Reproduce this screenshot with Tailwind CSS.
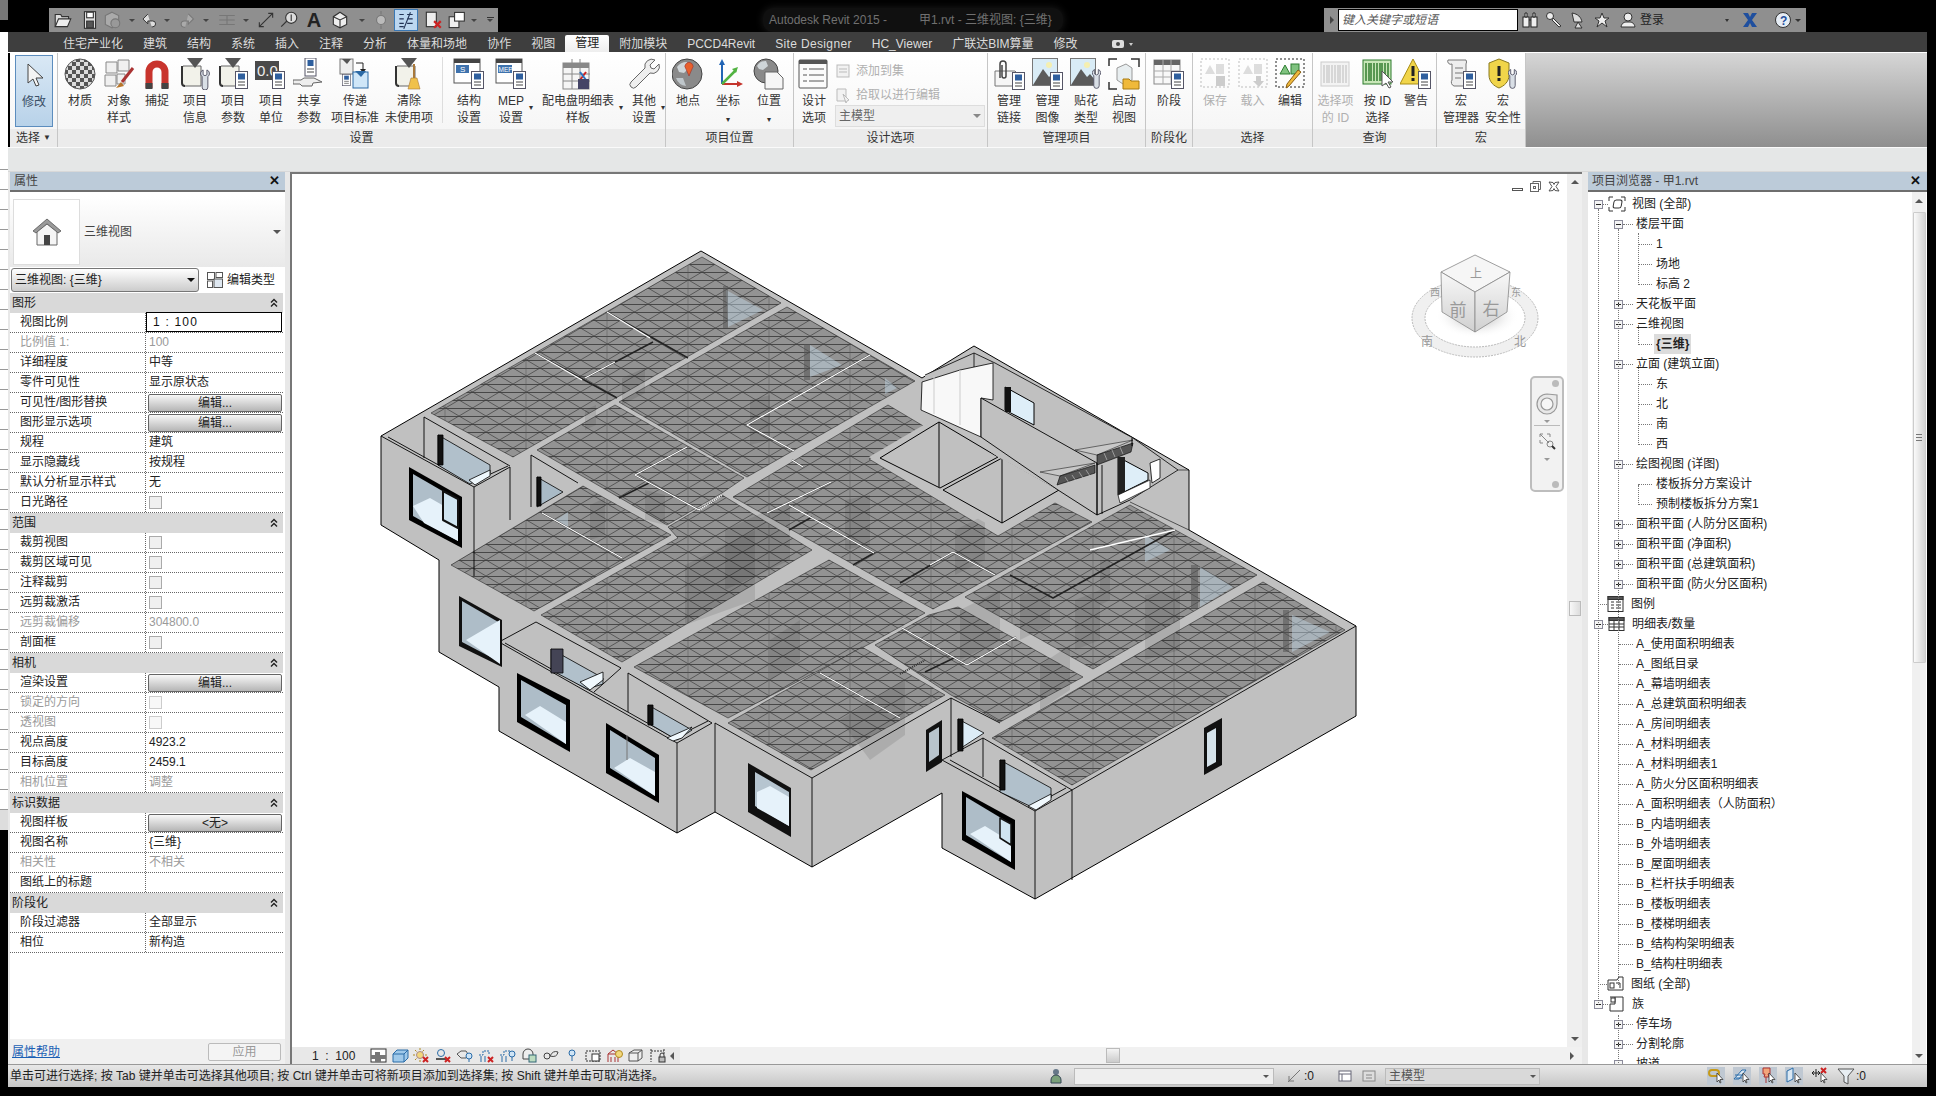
<!DOCTYPE html>
<html lang="zh-CN">

<head>
    <meta charset="UTF-8">
    <title>Autodesk Revit 2015</title>
    <script src="https://cdn.jsdelivr.net/npm/@tailwindcss/browser@4"></script>
</head>

<body class="bg-black">
    <div class="w-[1936px] h-[1096px] flex items-start overflow-hidden bg-black text-[12px] leading-[16px] text-[#222] font-['Liberation_Sans','Noto_Sans_CJK_SC',sans-serif]">
        <!-- window behind the app, left edge -->
        <div class="w-[8px] shrink-0 flex flex-col">
            <div class="h-[20px] bg-[#777]"></div>
            <div class="h-[12px]"></div>
            <div class="h-[118px] bg-white"></div>
            <div class="h-[660px] bg-[#f4f4f4] bg-[repeating-linear-gradient(to_bottom,#fff_0,#fff_19px,#999_19px,#999_20px)]"></div>
            <div class="h-[20px] bg-[#ddd]"></div>
        </div>

        <div class="w-[1919px] shrink-0 flex flex-col">
            <!-- title row -->
            <div class="h-[32px] flex items-start pt-[8px] bg-black">
                <div id="qat" class="ml-[41px] w-[449px] h-[24px] bg-[#8f8f8f] flex items-center"></div>
                <div class="ml-[265px] w-[300px] h-[24px] flex items-center gap-[32px] px-[6px] text-[#707070] bg-[#101010] shadow-[0_0_8px_#1c1c1c] rounded-[10px] text-[12px] whitespace-nowrap">
                    <span>Autodesk Revit 2015 -</span><span>甲1.rvt - 三维视图: {三维}</span>
                </div>
                <div class="ml-[261px] w-[482px] h-[24px] bg-[#8f8f8f] flex items-center pl-[6px]">
                    <span class="w-0 h-0 border-y-[4px] border-y-transparent border-l-[4px] border-l-[#444]"></span>
                    <div class="ml-[4px] w-[180px] h-[22px] bg-white border border-black flex items-center pl-[3px] italic text-[#555]">键入关键字或短语</div>
                    <div id="infocenter" class="flex items-center"></div>
                </div>
            </div>
            <!-- menu tabs -->
            <div class="h-[20px] bg-[#3e3e3e] flex items-end pl-[55px] text-[#dcdcdc]">
                <div class="flex h-[17px] items-center gap-[20px] whitespace-nowrap">
                    <span>住宅产业化</span><span>建筑</span><span>结构</span><span>系统</span><span>插入</span><span>注释</span><span>分析</span><span>体量和场地</span><span>协作</span><span>视图</span>
                    <span class="-mx-[10px] w-[44px] h-[17px] bg-gradient-to-b from-white to-[#eee] rounded-t-[2px] text-[#222] text-center">管理</span>
                    <span>附加模块</span><span>PCCD4Revit</span><span class="tracking-[.35px]">Site Designer</span><span>HC_Viewer</span><span>广联达BIM算量</span><span>修改</span>
                    <svg class="ml-[12px]" width="24" height="12" viewBox="0 0 24 12"><rect x="2" y="2" width="12" height="8" rx="2" fill="#ddd"/><circle cx="8" cy="6" r="2" fill="#444"/><path d="M19 5h4l-2 3z" fill="#ccc"/></svg>
                </div>
            </div>
            <!-- ribbon -->
            <div id="ribbon" class="h-[95px] flex pl-[2px] border-t border-white"></div>
            <div class="h-[25px] bg-[#e5e7e7] border-t border-[#fafafa] border-b border-b-[#d8d8d8]"></div>

            <!-- work area -->
            <div class="h-[892px] flex bg-[#e8e8e8]">
                <!-- properties -->
                <div class="w-[275px] ml-[2px] shrink-0 flex flex-col bg-white">
                    <div class="h-[18px] bg-[#bccbd9] flex items-center justify-between pl-[4px] pr-[5px] text-[#444]"><span>属性</span><span class="font-bold text-[#111] text-[13px]">✕</span></div>
                    <div class="h-[2px] bg-[#6e6e6e]"></div>
                    <div class="h-[71px] flex items-center pl-[3px] pr-[4px] bg-gradient-to-b from-white to-[#e9e9e9] mt-[4px]">
                        <div class="w-[67px] h-[66px] flex items-center justify-center bg-white border border-[#ddd]">
                            <svg width="32" height="30" viewBox="0 0 32 30"><path d="M2 14 16 2l14 12-3 2L16 7 5 16z" fill="#9a9a9a" stroke="#555" stroke-width=".8"/><path d="M6 15 16 7l10 8v13H6z" fill="#f5f5f5" stroke="#666"/><rect x="13" y="18" width="6" height="10" fill="#444"/></svg>
                        </div>
                        <span class="ml-[4px] text-[#444]">三维视图</span>
                        <span class="ml-auto w-0 h-0 border-x-[4px] border-x-transparent border-t-[4px] border-t-[#555]"></span>
                    </div>
                    <div class="h-[26px] flex items-center">
                        <div class="ml-[1px] w-[188px] h-[24px] rounded-[3px] border border-[#777] bg-gradient-to-b from-white to-[#ccc] flex items-center justify-between px-[3px]"><span>三维视图: {三维}</span><span class="w-0 h-0 border-x-[4px] border-x-transparent border-t-[4px] border-t-[#111]"></span></div>
                        <svg class="ml-[7px]" width="18" height="18" viewBox="0 0 18 18" fill="#fff" stroke="#555"><rect x="1.5" y="1.5" width="7" height="7"/><rect x="10" y="1.5" width="6.500" height="5"/><rect x="1.500" y="10" width="5" height="6.500"/><rect x="8" y="8" width="8.500" height="8.500" fill="#dfe8f1"/></svg>
                        <span class="ml-[3px]">编辑类型</span>
                    </div>
                    <div id="props" class="w-[273px]"></div>
                    <div class="flex-1"></div>
                    <div class="h-[25px] bg-[#f0f0f0] flex items-center justify-between pl-[2px] pr-[4px]">
                        <span class="text-[#1a5fb4] underline">属性帮助</span>
                        <span class="w-[73px] h-[18px] border border-[#bbb] rounded-[2px] bg-[#f4f4f4] text-center text-[#999]">应用</span>
                    </div>
                </div>
                <div class="w-[5px] shrink-0"></div>

                <!-- canvas -->
                <div class="w-[1292px] shrink-0 flex flex-col border-t-2 border-l-2 border-[#777]">
                    <div class="flex-1 flex min-h-0">
                        <div class="relative flex-1 bg-white overflow-hidden">
                            <svg class="absolute left-0 top-0" width="1275" height="871" viewBox="292 174 1275 871" stroke-linejoin="round">
                                <defs>
                                    <pattern id="hatch" patternUnits="userSpaceOnUse" width="81" height="16">
                                        <rect width="81" height="16" fill="#939393"/>
                                        <path d="M0 0l27 16M27 0l27 16M54 0l27 16M0 16l27-16M27 16l27-16M54 16l27-16" stroke="#3c3c3c" stroke-width=".7" fill="none"/>
                                        <path d="M0 0.500H81M0 8.500H81" stroke="#3e3e3e" stroke-width=".9" fill="none"/>
                                        <path d="M40 0V16" stroke="#555" stroke-width=".5" fill="none"/>
                                    </pattern>
                                    <linearGradient id="faceL" x1="0" y1="0" x2="0" y2="1"><stop offset="0" stop-color="#f8f8f8"/><stop offset="1" stop-color="#d0d0d0"/></linearGradient>
                                    <radialGradient id="cubeShadow"><stop offset="0" stop-color="#999"/><stop offset="1" stop-color="#fff" stop-opacity="0"/></radialGradient>
                                </defs>

                                <!-- silhouette -->
                                <path d="M381 436 701 251 922 378 974 346 1189 470V530L1356 626V716L1035 899 942 848V793L812 867 715 812 677 833 499 731V687L439 652V560L381 525Z" fill="#c0c0c0" stroke="#000"/>

                                <!-- floors -->
                                <g fill="url(#hatch)" stroke="#2a2a2a" stroke-width=".6">
                                    <path d="M702 257 781 303 614 399 513 457 431 413Z"/>
                                    <path d="M787 307 915 381 747 477 619 402Z"/>
                                    <path d="M615 405 744 478 722 493 667 525 537 450Z"/>
                                    <path d="M583 486 671 535 534 611 451 565Z"/>
                                    <path d="M541 615 678 538 668 527 722 495 812 550 622 662Z"/>
                                    <path d="M829 560 925 613 873 642 728 718 634 667Z"/>
                                    <path d="M862 647 945 695 811 770 728 723Z"/>
                                    <path d="M888 405 925 427 869 459 998 536 1055 503 1092 522 933 609 733 497Z"/>
                                    <path d="M958 607 1083 677 1000 722 951 695 875 645 929 615Z"/>
                                    <path d="M1130 505 1257 575 1093 669 965 597Z"/>
                                    <path d="M1263 582 1345 630 1072 785 992 738Z"/>
                                </g>

                                <!-- things seen through the floors -->
                                <g fill="#000" fill-opacity=".1">
                                    <path d="M622 378 645 368V393L622 405Z"/><path d="M750 400 770 395V440L750 445Z"/><path d="M585 410 596 405V425L585 430Z"/>
                                    <path d="M590 505 605 498V535L590 540Z"/><path d="M645 490 665 495V525L645 520Z"/><path d="M725 530 790 500V560L725 590Z"/>
                                    <path d="M685 565 755 530V600L685 625Z"/><path d="M840 720 905 680V735L870 760Z"/><path d="M770 640 800 620V660L770 680Z"/>
                                    <path d="M955 530 985 515V560L955 575Z"/><path d="M1075 600 1100 590V640L1075 650Z"/><path d="M1145 595 1180 590V650L1145 660Z"/>
                                    <path d="M845 500 870 495V545L845 550Z"/><path d="M960 610 1000 590V640L960 660Z"/><path d="M1040 665 1070 645V690L1040 710Z"/>
                                    <path d="M1100 560 1110 560V600L1100 605Z"/><path d="M1020 595 1050 590V625L1020 640Z"/>
                                </g>
                                <g fill="#c6dbea" fill-opacity=".45">
                                    <path d="M726 290 763 310 728 327Z"/><path d="M810 345 842 365 810 377Z"/><path d="M1200 567 1233 587 1200 607Z"/><path d="M1292 615 1330 632 1292 652Z"/><path d="M885 378 897 388 885 394Z"/><path d="M1145 535 1170 550 1145 562Z"/><path d="M556 520 568 512V530Z"/>
                                </g>
                                <g fill="#555" fill-opacity=".55">
                                    <rect x="723" y="286" width="5" height="42"/><rect x="804" y="344" width="6" height="36"/><rect x="1191" y="565" width="7" height="44"/><rect x="1283" y="610" width="6" height="42"/>
                                </g>

                                <!-- thin partitions, white with black edge -->
                                <g fill="none" stroke="#222" stroke-width="1.500">
                                    <path d="M607 312 688 358M535 353 617 398M585 378 653 342M870 355 747 425 794 451M687 447 635 475 699 510M619 498 649 483M542 513 622 558M792 460 803 467M831 482 767 513M789 505 874 553 853 565M789 530 812 517M902 628 967 665 1016 637M954 658 925 672M820 673 900 718M1010 575 1053 598 1175 530M953 552 995 575M953 552 900 583"/>
                                </g>
                                <g fill="none" stroke="#fff" stroke-width="1.300">
                                    <path d="M607 312 650 338M535 353 582 380M585 378 615 362M870 355 747 425 794 451M687 447 635 475 699 510M542 513 622 558M792 460 803 467M831 482 767 513M789 505 874 553M902 628 967 665 1016 637M820 673 900 718M1090 550 1175 530M953 552 995 575M953 552 930 565"/>
                                </g>
                                <path d="M699 510 722 495" stroke="#fff" stroke-width="2" stroke-dasharray="1 1"/>
                                <path d="M900 674 925 660" stroke="#333" stroke-width="2" stroke-dasharray="1 1"/>

                                <!-- shafts -->
                                <path d="M939 416 1059 489 998 530 869 457Z" fill="#c0c0c0"/>
                                <path d="M939 422 998 457 940 488 880 458ZM1002 458 1059 490 1002 523 943 490ZM939 422V487M1002 458V523" fill="#c0c0c0" stroke="#000"/>

                                <!-- upper right block -->
                                <path d="M925 375 974 353 995 363 1133 438 1178 470 1130 500 1097 515 1070 500 1070 490 1058 490 998 457 939 416 925 410Z" fill="#c0c0c0"/>
                                <path d="M922 382 960 370 993 363V400L981 398V437L921 410Z" fill="#f8f8f8" stroke="#000" stroke-width=".8"/>
                                <path d="M934 376V414M960 370V425" stroke="#ccc"/>
                                <path d="M925 375 974 353 995 363 1133 438 1178 470 1130 500M974 353V367" fill="none" stroke="#000" stroke-width=".8"/>
                                <path d="M981 398 1097 463V515L1058 490 981 437Z" fill="#c0c0c0" stroke="#000" stroke-width=".9"/>
                                <path d="M1005 387 1034 403V425L1005 410Z" fill="#deeef8" stroke="#000"/><rect x="1005" y="387" width="6" height="25" fill="#111"/>
                                <path d="M1040 472 1095 463 1060 476ZM1075 450 1133 440 1097 455Z" fill="#c8c8c8" stroke="#222" stroke-width=".6"/>
                                <path d="M1060 476 1095 465V473L1057 485Z" fill="#555" stroke="#000" stroke-width=".6"/>
                                <path d="M1097 455 1133 443 1131 452 1097 465Z" fill="#555" stroke="#000" stroke-width=".6"/>
                                <path d="M1065 477 1069 483M1072 475 1076 481M1079 472 1083 478M1086 470 1090 476M1104 453 1107 460M1112 450 1115 457M1120 447 1123 454" stroke="#ccc" stroke-width=".6"/>
                                <path d="M1097 463V515M1102 465V514M1097 515 1130 500" fill="none" stroke="#000" stroke-width=".9"/>
                                <path d="M1118 457 1148 473V480L1118 495Z" fill="#deeef8" stroke="#000"/><rect x="1118" y="457" width="7" height="38" fill="#222"/>
                                <path d="M1118 495 1150 480V488L1120 503Z" fill="#fff" stroke="#000" stroke-width=".7"/>
                                <path d="M1150 463 1160 459V478L1152 483Z" fill="#fff" stroke="#000" stroke-width=".8"/>
                                <path d="M1132 438V446" stroke="#000"/>
                                <path d="M1178 470 1189 470M1130 502 1189 530" stroke="#000" fill="none" stroke-width=".6"/>

                                <!-- balconies -->
                                <g fill="none" stroke="#000" stroke-width=".9">
                                    <path d="M381 436 474 487 510 467M388 437 471 483 508 466M424 417 510 466M424 417V458M474 487V576M510 467V520M531 455V507M531 455 578 483"/>
                                    <path d="M499 642 677 743 712 723M505 643 674 738 708 721M536 622 621 668 594 692M536 622 499 642M628 673 712 723M628 673V712M677 743V833M715 723V812M715 723 812 778M812 778V867M812 778 951 698M951 698V757M951 698 1000 723"/>
                                    <path d="M942 760 1035 811 1072 790M950 760 1033 806 1066 788M983 738 942 760M983 738 1072 790M983 738V777M1072 790V880M1035 811V899M1072 790 1356 626"/>
                                </g>

                                <!-- windows: frame, back wall, sill -->
                                <g stroke="#000" stroke-width=".8">
                                    <path d="M438 435 490 465V473L470 484 438 465Z" fill="#b1c0cb"/><rect x="438" y="435" width="5" height="30" fill="#111"/><path d="M469 480 490 470V476L475 485Z" fill="#eef7fc"/>
                                    <path d="M537 477 563 492 537 507Z" fill="#a9bac6"/><rect x="537" y="477" width="4" height="29" fill="#111"/>
                                    <path d="M551 649 603 678V684L587 689 551 670Z" fill="#b1c0cb"/><rect x="551" y="649" width="12" height="24" fill="#445"/><path d="M580 682 603 672V680L590 690Z" fill="#f0f8fd"/>
                                    <path d="M648 705 692 730 677 740 648 723Z" fill="#b1c0cb"/><rect x="648" y="705" width="5" height="20" fill="#111"/><path d="M667 738 692 727 682 738 673 741Z" fill="#f0f8fd"/>
                                    <path d="M1000 760 1051 788V798L1034 808 1000 792Z" fill="#b1c0cb"/><rect x="1000" y="760" width="5" height="30" fill="#111"/><path d="M1028 806 1051 794V800L1036 810Z" fill="#f0f8fd"/>
                                    <path d="M958 719 984 733 958 750Z" fill="#dcecf6"/><rect x="958" y="719" width="5" height="32" fill="#111"/>
                                </g>
                                <g>
                                    <path d="M409 467 462 497V548L409 520Z" fill="#000"/><path d="M413 474 458 500V541L413 516Z" fill="#afbec9"/><path d="M413 506 430 498 458 514V541L424 523Z" fill="#e6f2fa"/><path d="M443 491 458 499V528L443 520Z" fill="#cfe4f0" stroke="#111" stroke-width="2"/>
                                    <path d="M459 596 502 620V667L459 646Z" fill="#111"/><path d="M462 601 500 623V662L462 642Z" fill="#aebdc8"/><path d="M466 640 500 620V664Z" fill="#e6f2fa"/>
                                    <path d="M517 673 570 700V752L517 722Z" fill="#000"/><path d="M521 680 566 705V744L521 717Z" fill="#aebdc8"/><path d="M525 715 540 706 566 722V744Z" fill="#e6f2fa"/>
                                    <path d="M606 723 659 755V803L606 773Z" fill="#000"/><path d="M610 730 655 758V796L610 768Z" fill="#aebdc8"/><path d="M614 768 630 758 655 772V796Z" fill="#e6f2fa"/><path d="M627 735V760" stroke="#777"/>
                                    <path d="M748 763 791 788V837L748 812Z" fill="#111"/><path d="M755 772 789 792V826L755 806Z" fill="#b6c5d0"/><path d="M757 808V792L770 786 789 797V826Z" fill="#e6f2fa"/>
                                    <path d="M962 791 1015 820V870L962 840Z" fill="#000"/><path d="M966 797 1011 824V862L966 835Z" fill="#aebdc8"/><path d="M970 834 985 826 1011 842V862Z" fill="#e6f2fa"/><path d="M1000 818 1011 824V845L1000 838Z" fill="#cfe4f0" stroke="#111" stroke-width="1.500"/>
                                    <path d="M926 730 942 720V762L926 772Z" fill="#111"/><path d="M929 733 939 727V755L929 762Z" fill="#b8c4cc"/>
                                    <path d="M1204 728 1222 718V765L1204 775Z" fill="#111"/><path d="M1207 733 1216 728V762L1207 767Z" fill="#d5e2ea"/>
                                </g>

                                <!-- ViewCube -->
                                <g>
                                    <path d="M1475 318m-63 0a63 39 0 0 0 126 0a63 39 0 0 0-126 0m13 0a50 29 0 0 1 100 0a50 29 0 0 1-100 0" fill="#f0f0f0" fill-rule="evenodd"/>
                                    <ellipse cx="1475" cy="318" rx="63" ry="39" fill="none" stroke="#bbb" stroke-dasharray="2 1" stroke-width="1"/>
                                    <ellipse cx="1475" cy="318" rx="50" ry="29" fill="none" stroke="#bbb" stroke-dasharray="2 1" stroke-width="1"/>
                                    <ellipse cx="1477" cy="316" rx="42" ry="22" fill="url(#cubeShadow)"/>
                                    <path d="M1475 255 1510 272 1475 292 1441 272Z" fill="#f6f6f6" stroke="#888" stroke-width=".8"/>
                                    <path d="M1441 272 1475 292V332L1442 312Z" fill="url(#faceL)" stroke="#888" stroke-width=".8"/>
                                    <path d="M1510 272 1475 292V332L1507 312Z" fill="url(#faceL)" stroke="#888" stroke-width=".8"/>
                                    <g fill="#999" text-anchor="middle">
                                        <text x="1476" y="278" font-size="12">上</text><text x="1458" y="316" font-size="17">前</text><text x="1491" y="315" font-size="17">右</text>
                                        <text x="1435" y="296" font-size="10">西</text><text x="1516" y="296" font-size="10">东</text><text x="1427" y="346" font-size="12">南</text><text x="1520" y="346" font-size="12">北</text>
                                    </g>
                                </g>
                            </svg>

                            <!-- view window controls -->
                            <div class="absolute top-[7px] right-[7px] flex items-center gap-[7px]">
                                <span class="w-[11px] h-[3px] border border-[#555] mt-[5px]"></span>
                                <svg width="11" height="11" viewBox="0 0 11 11" fill="none" stroke="#666"><path d="M3 2.500V.5h7.500v8H8.500"/><rect x=".5" y="2.500" width="8" height="8" fill="#fff"/><rect x="3.500" y="5.500" width="2" height="2"/></svg>
                                <svg width="12" height="11" viewBox="0 0 12 11" fill="#fff" stroke="#555"><path d="M1 1l4 .5 1 2 1-2 4-.5-3 4.500 3 4.500-4-.5-1-2-1 2-4 .5 3-4.500z"/></svg>
                            </div>
                            <!-- navigation bar -->
                            <div class="absolute left-[1238px] top-[202px] w-[34px] h-[116px] rounded-[5px] border-2 border-[#bdbdbd] bg-[#f2f2f2] flex flex-col items-center">
                                <span class="self-end mr-[3px] mt-[2px] w-[7px] h-[7px] rounded-full bg-[#bbb]"></span>
                                <svg class="mt-[6px]" width="22" height="22" viewBox="0 0 22 22" fill="none" stroke="#999" stroke-width="1.200"><path d="M21 2v9a10 10 0 1 1-10-10z" fill="#e8e8e8"/><circle cx="11" cy="11" r="6" fill="#f6f6f6"/></svg>
                                <span class="mt-[5px] w-0 h-0 border-x-[3px] border-x-transparent border-t-[3px] border-t-[#999]"></span>
                                <span class="mt-[2px] w-[26px] h-px bg-[#bbb]"></span>
                                <svg class="mt-[6px]" width="18" height="18" viewBox="0 0 18 18" fill="none" stroke="#888"><path d="M2 5V2h3M9 2h3v3M2 8v3h3M2 2l9 9"/><circle cx="12" cy="12" r="3"/><path d="M14 14l3 3" stroke="#333" stroke-width="2"/></svg>
                                <span class="mt-[8px] w-0 h-0 border-x-[3px] border-x-transparent border-t-[3px] border-t-[#999]"></span>
                                <span class="self-end mr-[3px] mt-auto mb-[2px] w-[7px] h-[7px] rounded-full bg-[#bbb]"></span>
                            </div>
                        </div>
                        <!-- vertical scrollbar of the view -->
                        <div class="w-[15px] shrink-0 bg-[#efefef] flex flex-col items-center pt-[6px]">
                            <span class="w-0 h-0 border-x-[4px] border-x-transparent border-b-[4px] border-b-[#555]"></span>
                            <span class="mt-[417px] w-[12px] h-[15px] bg-gradient-to-r from-[#f8f8f8] to-[#ddd] border border-[#bbb]"></span>
                            <span class="mt-auto mb-[6px] w-0 h-0 border-x-[4px] border-x-transparent border-t-[4px] border-t-[#555]"></span>
                        </div>
                    </div>
                    <!-- view control bar -->
                    <div class="h-[17px] bg-[#f1f1f1] flex items-center text-[#222] shrink-0">
                        <div class="w-[388px] h-full flex items-center bg-[#e8e8e8]">
                            <span class="ml-[20px] w-[58px] whitespace-pre">1  :  100</span>
                            <div id="viewctl" class="flex items-center gap-[4.5px]"></div>
                            <span class="ml-[3px] w-0 h-0 border-y-[4px] border-y-transparent border-r-[4px] border-r-[#555]"></span>
                        </div>
                        <span class="ml-[426px] w-[14px] h-[15px] bg-gradient-to-b from-[#f4f4f4] to-[#ccc] border border-[#bbb]"></span>
                        <span class="ml-auto mr-[8px] w-0 h-0 border-y-[4px] border-y-transparent border-l-[4px] border-l-[#555]"></span>
                    </div>
                </div>
                <div class="w-[6px] shrink-0"></div>

                <!-- project browser -->
                <div class="w-[339px] shrink-0 flex flex-col bg-white">
                    <div class="h-[18px] bg-[#bccbd9] flex items-center justify-between pl-[4px] pr-[6px] text-[#444]"><span>项目浏览器 - 甲1.rvt</span><span class="font-bold text-[#111] text-[13px]">✕</span></div>
                    <div class="h-[2px] bg-[#6e6e6e]"></div>
                    <div class="flex-1 flex min-h-0">
                        <div id="tree" class="relative w-[324px] overflow-hidden pt-[2px]"></div>
                        <div class="w-[14px] shrink-0 bg-[#f0f0f0] flex flex-col items-center pt-[7px]">
                            <span class="w-0 h-0 border-x-[4px] border-x-transparent border-b-[4px] border-b-[#555]"></span>
                            <div class="mt-[9px] w-[13px] h-[451px] rounded-[1px] bg-gradient-to-r from-[#fafafa] to-[#d4d4d4] border border-[#ccc] flex items-center justify-center">
                                <span class="w-[6px] h-[7px] border-y border-[#777] bg-[linear-gradient(#777,#777)] bg-[length:100%_1px] bg-center bg-no-repeat"></span>
                            </div>
                            <span class="mt-auto mb-[6px] w-0 h-0 border-x-[4px] border-x-transparent border-t-[4px] border-t-[#555]"></span>
                        </div>
                    </div>
                </div>
            </div>

            <!-- status bar -->
            <div class="h-[23px] flex items-center bg-gradient-to-b from-[#e8e8e8] to-[#c6c6c6] border-t border-[#999]">
                <span class="ml-[2px] w-[1035px] whitespace-nowrap">单击可进行选择; 按 Tab 键并单击可选择其他项目; 按 Ctrl 键并单击可将新项目添加到选择集; 按 Shift 键并单击可取消选择。</span>
                <svg class="ml-[3px]" width="18" height="18" viewBox="0 0 18 18"><circle cx="8" cy="5" r="3" fill="#678"/><path d="M3 16v-3a5 5 0 0 1 10 0v3z" fill="#7aa07a" stroke="#345"/></svg>
                <div class="ml-[8px] w-[200px] h-[17px] bg-[#eee] border border-[#bbb] flex items-center justify-end pr-[4px]"><span class="w-0 h-0 border-x-[3px] border-x-transparent border-t-[3px] border-t-[#555]"></span></div>
                <svg class="ml-[12px]" width="16" height="16" viewBox="0 0 16 16" fill="none" stroke="#777"><path d="M2 14 14 2M3 8v5h5"/></svg>
                <span class="ml-[2px]">:0</span>
                <svg class="ml-[23px]" width="16" height="16" viewBox="0 0 16 16" fill="#fff" stroke="#667"><rect x="2" y="3" width="12" height="10"/><path d="M2 6h12M5 6v7"/></svg>
                <svg class="ml-[8px]" width="16" height="16" viewBox="0 0 16 16" fill="#ddd" stroke="#888"><rect x="2" y="3" width="12" height="10"/><path d="M5 7h6M5 10h6"/></svg>
                <div class="ml-[8px] w-[155px] h-[17px] bg-[#d9d9d9] border border-[#bbb] flex items-center justify-between px-[3px] text-[#555]"><span>主模型</span><span class="w-0 h-0 border-x-[3px] border-x-transparent border-t-[3px] border-t-[#555]"></span></div>
                <div id="statusicons" class="ml-[167px] flex items-center gap-[8px]"></div>
                <span class="ml-[1px]">:0</span>
            </div>
        </div>
    </div>

    <!-- shared icon parts -->
    <svg class="absolute w-0 h-0">
        <symbol id="form" viewBox="0 0 13 18"><rect x=".5" y=".5" width="12" height="17" fill="#fff" stroke="#556"/><rect x="3" y="2.500" width="7" height="6" fill="#2f5f9e"/><path d="M3 11h7M3 14h7" stroke="#444"/></symbol>
        <symbol id="scroll" viewBox="0 0 26 32"><path d="M4 8h18v20H6a3 3 0 0 1-3-3V10z" fill="#f2f2ea" stroke="#666"/><path d="M3 8v17a3 3 0 0 0 3 3" fill="none" stroke="#333" stroke-width="2"/><path d="M8 0h16l-8 10z" fill="#555"/></symbol>
        <symbol id="wrench" viewBox="0 0 10 22"><path d="M3 1v5l2 1 2-1V1a4 4 0 0 1 1 7v11a2 2 0 0 1-6 0V8a4 4 0 0 1 1-7z" fill="#d9dfe6" stroke="#556"/></symbol>
        <symbol id="land" viewBox="0 0 26 28"><rect x=".5" y=".5" width="25" height="27" fill="#d9ecf6" stroke="#777"/><circle cx="17" cy="7" r="3" fill="#f5efb0"/><path d="M1 27 11 11l6 8 3-3 5 6v5z" fill="#5b5b5b"/></symbol>
        <symbol id="dash" viewBox="0 0 30 30"><rect x="1" y="1" width="28" height="28" fill="none" stroke="currentColor" stroke-dasharray="2 2"/><path d="M5 16 10 7l5 9z" fill="currentColor" opacity=".5"/><rect x="16" y="6" width="8" height="10" fill="currentColor" opacity=".5"/></symbol>
    </svg>

    <script>
        const g = (s, w = 32, h = 32) => `<svg width="${w}" height="${h}" viewBox="0 0 32 32">${s}</svg>`;
        const formAt = (x, y) => `<use href="#form" x="${x}" y="${y}" width="13" height="18"/>`;
        const checker = [0, 1, 2, 3, 4, 5, 6, 7].map(i => [0, 1, 2, 3, 4, 5, 6, 7].map(j => (i + j) % 2 ? `<rect x="${i * 4}" y="${j * 4}" width="4" height="4" fill="#555"/>` : '').join('')).join('');
        const icons = {
            material: g(`<clipPath id="ballclip"><circle cx="16" cy="16" r="15"/></clipPath><g clip-path="url(#ballclip)"><rect width="32" height="32" fill="#ddd"/>${checker}</g><circle cx="16" cy="16" r="15" fill="none" stroke="#555"/>`),
            objstyle: g(`<path d="M3 4h11v11H3zM15 2h11v11H15zM2 17h11v11H2zM14 16h8v10h-8z" fill="#f0f0f0" stroke="#888"/><path d="M30 10 19 24" stroke="#a33" stroke-width="3"/><path d="M18 24l-5 6 8-2z" fill="#b8762a"/>`),
            snap: g(`<path d="M8 30V14a8 8 0 0 1 16 0v16" fill="none" stroke="#c8342d" stroke-width="7"/><path d="M4.500 25h7v6h-7zM20.500 25h7v6h-7z" fill="#444"/>`),
            projinfo: g(`<use href="#scroll" width="26" height="32"/><use href="#wrench" x="21" y="11" width="10" height="21"/>`),
            projparam: g(`<use href="#scroll" width="26" height="32"/>${formAt(18, 13)}`),
            projunit: g(`<rect x="0" y="3" width="24" height="19" fill="#4a4a4a"/><text x="2" y="18" font-size="15" fill="#eee">0.0</text>${formAt(17, 13)}`),
            shared: g(`<rect x="12" y="0" width="11" height="18" fill="#fff" stroke="#556"/><rect x="14.500" y="2" width="6" height="6" fill="#2f5f9e"/><path d="M14 11h7M14 14h7" stroke="#444"/><path d="M0 22h8l3-2h10l8 4-9 1-1 3H9l-2-2H0z" fill="#eee" stroke="#666"/>`),
            transfer: g(`<rect x="1" y="1" width="13" height="15" fill="#eee" stroke="#777"/><path d="M3 1h9l-4 5z" fill="#555"/><path d="M17 5h7v6" fill="none" stroke="#222"/><path d="M21 11h6l-3 4z" fill="#222"/><rect x="14" y="14" width="15" height="16" fill="#cfe6f8" stroke="#2c6aa6"/><path d="M16 13h11l-5 6z" fill="#2c6aa6"/>${formAt(3, 16).replace('width="13" height="18"', 'width="9" height="12"')}`),
            purge: g(`<use href="#scroll" width="26" height="32"/><path d="M21 6v14" stroke="#a9793b" stroke-width="2"/><path d="M18 20h6l3 11H15z" fill="#f0c14b" stroke="#a9793b" stroke-width=".6"/>`),
            struct: g(`<rect x="1" y="1" width="26" height="24" fill="#fff" stroke="#555"/><rect x="1" y="1" width="26" height="4" fill="#444"/><rect x="3" y="7" width="13" height="8" fill="#3e72ad"/><text x="7" y="14" font-size="8" fill="#fff">S</text>${formAt(18, 13)}`),
            mep: g(`<rect x="1" y="1" width="26" height="24" fill="#fff" stroke="#555"/><rect x="1" y="1" width="26" height="4" fill="#444"/><rect x="3" y="7" width="14" height="8" fill="#3e72ad"/><text x="3.500" y="14" font-size="6.500" fill="#fff">MEP</text>${formAt(18, 13)}`),
            panel: g(`<rect x="1" y="5" width="26" height="26" fill="#f5f5f5" stroke="#888"/><rect x="1" y="5" width="26" height="5" fill="#888"/><path d="M10 1V31M18 1V31M1 16H28M1 23H28" stroke="#888"/><path d="M24 14l-6 8" stroke="#c22" stroke-width="2"/><path d="M18 14l6 8" stroke="#2a72c0" stroke-width="2"/><rect x="16" y="21" width="11" height="10" fill="#446"/>`),
            other: g(`<path d="M27 2l-5 5 1 3 3 1 5-5a7 7 0 0 1-9 9L8 29a3 3 0 0 1-5-5L17 10a7 7 0 0 1 10-8z" fill="#eee" stroke="#666"/>`),
            site: g(`<circle cx="15" cy="16" r="15" fill="#8a8a8a" stroke="#444"/><path d="M5 9a12 12 0 0 1 10-5l2 6-5 5-5-1z" fill="#cfd5d8"/><path d="M4 20l7 0 3 8a12 12 0 0 1-10-8z" fill="#bfc6ca"/><path d="M17 18l-3-7a4 4 0 1 1 6 0z" fill="#e8602c" stroke="#933" stroke-width=".6"/>`),
            coord: g(`<path d="M10 26V6" stroke="#2265b5" stroke-width="2"/><path d="M10 1l-3 6h6z" fill="#2265b5"/><path d="M10 26h18" stroke="#c4342c" stroke-width="2"/><path d="M31 26l-6-3v6z" fill="#c4342c"/><path d="M10 26 24 12" stroke="#52b342" stroke-width="2.500"/><path d="M26 9l-6 2 4 4z" fill="#52b342"/>`),
            position: g(`<circle cx="13" cy="13" r="12" fill="#8a8a8a" stroke="#444"/><path d="M4 8a10 10 0 0 1 9-5l2 5-5 4-4-1z" fill="#cfd5d8"/><path d="M12 14h12l6 6v11H12z" fill="#f6f6f6" stroke="#666"/>`),
            design: g(`<rect x="1" y="2" width="28" height="28" rx="1" fill="#fbfbfb" stroke="#555"/><rect x="1" y="2" width="28" height="4" fill="#555"/><path d="M5 11h4M11 11h15M5 17h4M11 17h15M5 23h4M11 23h15" stroke="#555"/>`),
            link: g(`<path d="M2 13h20l5 5v10H2z" fill="#f6f6f6" stroke="#777"/><path d="M7 20V6a3 3 0 0 1 6 0v12a2 2 0 0 1-4 0V7" fill="none" stroke="#444" stroke-width="1.500"/>${formAt(19, 14)}`),
            image: g(`<use href="#land" width="26" height="28"/>${formAt(18, 14)}`),
            decal: g(`<use href="#land" width="26" height="28"/><use href="#wrench" x="22" y="10" width="9" height="21"/>`),
            startview: g(`<path d="M1 8V1h8M23 1h8v8M1 24v7h8" fill="none" stroke="#333" stroke-width="1.500"/><path d="M9 10l9-4 6 4v12l-9 4-6-4z" fill="#e8eef0" stroke="#999"/><path d="M15 21h6l2 2h8v8H15z" fill="#f0b93a" stroke="#a87a12"/>`),
            phase: g(`<rect x="1" y="2" width="26" height="24" fill="#f8f8f8" stroke="#888"/><rect x="1" y="2" width="26" height="5" fill="#666"/><path d="M10 2V26M18 2V26M1 13H27M1 19H27" stroke="#aaa"/>${formAt(18, 13)}`),
            save: `<span class="text-[#bdbdbd]"><svg width="30" height="32" viewBox="0 0 30 32"><use href="#dash" width="30" height="30"/><rect x="16" y="18" width="9" height="10" fill="#ccc"/></svg></span>`,
            load: `<span class="text-[#bdbdbd]"><svg width="30" height="32" viewBox="0 0 30 32"><use href="#dash" width="30" height="30"/><path d="M18 18h5v5h3l-5 6-6-6h3z" fill="#ccc"/></svg></span>`,
            edit: `<span class="text-[#2e7d32]"><svg width="30" height="32" viewBox="0 0 30 32"><rect x="1" y="1" width="28" height="28" fill="none" stroke="#222" stroke-dasharray="2 2"/><path d="M5 16 10 7l5 9z" fill="#7fc27f" stroke="#2e7d32"/><rect x="16" y="6" width="8" height="10" fill="#7fc27f" stroke="#2e7d32"/><path d="M26 14 14 28l-3 2 1-4 11-14z" fill="#efb93c" stroke="#8a5d10"/></svg></span>`,
            barcodeoff: g(`<rect x="1" y="4" width="28" height="24" fill="#f3f3f3" stroke="#ccc"/><path d="M4 7v18M7 7v18M9 7v18M12 7v18M15 7v18M18 7v18M20 7v18M23 7v18M26 7v18" stroke="#bbb"/>`),
            barcode: g(`<rect x="1" y="2" width="28" height="24" fill="#c8e6b8" stroke="#2b7a2b"/><path d="M4 5v18M7 5v18M9 5v18M12 5v18M15 5v18M18 5v18M20 5v18M23 5v18M26 5v18" stroke="#1d6e1d" stroke-width="1.300"/><path d="M20 13v15l4-3 3 5 2-1-3-5h5z" fill="#fff" stroke="#555"/>`),
            warn: g(`<path d="M13 1 26 26H0z" fill="#f1d54a" stroke="#a98d14"/><rect x="11.500" y="8" width="3" height="10" fill="#222"/><rect x="11.500" y="20" width="3" height="3" fill="#222"/>${formAt(18, 13)}`),
            macro: g(`<path d="M3 2h18a4 4 0 0 1 0 4v22H9a4 4 0 0 1-2-6V6a3 3 0 0 1-4-4z" fill="#eee" stroke="#777"/><path d="M10 10h8M10 15h8M10 20h6" stroke="#777"/>${formAt(18, 13)}`),
            shield: g(`<path d="M12 1 22 5v12c0 7-5 11-10 13C7 28 2 24 2 17V5z" fill="#f1d54a" stroke="#8a7a20"/><rect x="10.500" y="8" width="3" height="10" fill="#222"/><rect x="10.500" y="20" width="3" height="3" fill="#222"/><use href="#wrench" x="21" y="10" width="9" height="21"/>`),
            modify: `<svg width="22" height="26" viewBox="0 0 22 26"><path d="M5 2v19l5-4 3 7 3-1-3-7h7z" fill="#f4f4f4" stroke="#444"/></svg>`
        };

        // small drop arrow: beside a label, or alone on the second label line
        const side = (t) => `<span class="relative">${t}<span class="absolute -right-[9px] top-[5px] text-[8px]">▾</span></span>`;
        const under = '<span class="text-[8px]">▾</span>';

        const btn = (w, icon, l1, l2 = '', off = false) => `<div class="flex flex-col items-center shrink-0 pt-[5px] leading-[17px] ${off ? 'text-[#b0b0b0]' : 'text-[#333]'}" style="width:${w}px">
            <div class="h-[35px] flex items-start">${icons[icon]}</div>
            <span class="whitespace-nowrap">${l1}</span><span class="whitespace-nowrap">${l2}</span></div>`;
        const panel = (w, label, body, extra = '') => `<div class="shrink-0 flex flex-col border-r border-[#c6c6c6]" style="width:${w}px">
            <div class="h-[76px] shrink-0 flex ${extra} bg-gradient-to-b from-white to-[#f6f6f6]">${body}</div>
            <div class="h-[18px] shrink-0 bg-[#ebebeb] flex items-center justify-center text-[#333] whitespace-nowrap">${label}</div></div>`;

        document.getElementById('ribbon').innerHTML =
            panel(48, '选择 <span class="ml-[3px] text-[8px]">▼</span>', `<div class="ml-[5px] mt-[2px] w-[38px] h-[72px] flex flex-col items-center pt-[6px] bg-gradient-to-b from-[#d9e8f5] to-[#b8d2e9] border border-[#5c8dbe] text-[#3a4f66]">${icons.modify}<span class="mt-[6px]">修改</span></div>`) +
            panel(608, '设置', '<div class="w-[2px]"></div>' + btn(40, 'material', '材质') + btn(38, 'objstyle', '对象', '样式') + btn(38, 'snap', '捕捉') + btn(38, 'projinfo', '项目', '信息') + btn(38, 'projparam', '项目', '参数') + btn(38, 'projunit', '项目', '单位') + btn(38, 'shared', '共享', '参数') + btn(54, 'transfer', '传递', '项目标准') + btn(54, 'purge', '清除', '未使用项') +
                '<div class="w-[6px]"></div><div class="w-px h-[66px] mt-[4px] bg-[#ddd]"></div>' + btn(52, 'struct', '结构', '设置') + btn(32, 'mep', side('MEP'), '设置') + btn(102, 'panel', side('配电盘明细表'), '样板') + btn(30, 'other', side('其他'), '设置')) +
            panel(128, '项目位置', '<div class="w-[2px]"></div>' + btn(40, 'site', '地点') + btn(40, 'coord', '坐标', under) + btn(42, 'position', '位置', under)) +
            panel(194, '设计选项', btn(40, 'design', '设计', '选项') + `<div class="relative flex-1 pt-[6px] text-[#b0b0b0]">
                <div class="h-[24px] flex items-center gap-[5px] pl-[1px]"><svg width="16" height="16" viewBox="0 0 16 16" fill="#f2f2f2" stroke="#bbb"><rect x="2" y="2" width="12" height="12"/><path d="M4 6h8M4 9h8"/></svg>添加到集</div>
                <div class="h-[24px] flex items-center gap-[5px] pl-[1px]"><svg width="16" height="16" viewBox="0 0 16 16" fill="#f2f2f2" stroke="#bbb"><path d="M2 2h9v12H2z"/><path d="M8 7l6 6-2 1-1 2z"/></svg>拾取以进行编辑</div>
                <div class="absolute left-[1px] bottom-[2px] w-[150px] h-[22px] bg-[#efefef] border border-[#ddd] flex items-center justify-between px-[3px] text-[#666]"><span>主模型</span><span class="w-0 h-0 border-x-[4px] border-x-transparent border-t-[4px] border-t-[#888]"></span></div></div>`) +
            panel(158, '管理项目', '<div class="w-[2px]"></div>' + btn(38, 'link', '管理', '链接') + btn(39, 'image', '管理', '图像') + btn(38, 'decal', '贴花', '类型') + btn(38, 'startview', '启动', '视图')) +
            panel(47, '阶段化', btn(46, 'phase', '阶段')) +
            panel(120, '选择', '<div class="w-[3px]"></div>' + btn(38, 'save', '保存', '', true) + btn(37, 'load', '载入', '', true) + btn(38, 'edit', '编辑')) +
            panel(124, '查询', btn(45, 'barcodeoff', '选择项', '的 ID', true) + btn(39, 'barcode', '按 ID', '选择') + btn(38, 'warn', '警告')) +
            panel(89, '宏', '<div class="w-[2px]"></div>' + btn(44, 'macro', '宏', '管理器') + btn(40, 'shield', '宏', '安全性')) +
            '<div class="flex-1 h-[94px] bg-gradient-to-b from-[#d6d6d6] to-[#8f8f8f]"></div>';

        // quick access toolbar: [centre x, icon]
        const tri = '<span class="w-0 h-0 border-x-[3px] border-x-transparent border-t-[3px] border-t-[#444]"></span>';
        const q = (s) => `<svg width="20" height="20" viewBox="0 0 18 18" fill="none" stroke="#333">${s}</svg>`;
        const qat = [
            [65, q('<path d="M2 15V4h5l1 2h6v2" fill="#ddd"/><path d="M2 15l3-7h11l-3 7z" fill="#eee"/>')],
            [90, q('<rect x="4" y="1.500" width="10" height="15" fill="#ddd"/><rect x="6" y="2" width="6" height="5" fill="#fff"/><rect x="6" y="10" width="6" height="6" fill="#555"/>')],
            [113, q('<path d="M9 2 15 5v8l-6 3-6-3V5z" fill="#aaa" stroke="#777"/><circle cx="12" cy="12" r="4" fill="#999" stroke="#777"/>')],
            [132, tri],
            [149, q('<path d="M7 3 2 8l5 5V10h5a3 3 0 0 1 0 6h-1" fill="#ddd"/>')],
            [167, tri],
            [186, q('<path d="M11 3l5 5-5 5V10H7a3 3 0 0 0 0 6h1" fill="#aaa" stroke="#777"/>')],
            [204, tri],
            [228, q('<path d="M2 5h14M2 13h14M9 5v8M2 9h14" stroke="#777"/>')],
            [246, tri],
            [265, q('<path d="M3 15 15 3M3 11v4h4M11 3h4v4"/>')],
            [289, q('<path d="M2 15 8 9"/><circle cx="11" cy="7" r="5" fill="#ddd"/><path d="M11 4v6"/>')],
            [312, '<span class="text-[20px] font-bold text-[#222] leading-none">A</span>'],
            [343, q('<path d="M9 2 15 6v7l-6 3-6-3V6z" fill="#eee"/><path d="M3 6l6 3 6-3M9 9v7"/>')],
            [362, tri],
            [379, q('<circle cx="9" cy="9" r="4" fill="#bbb" stroke="#777"/><path d="M9 1v3M9 14v3" stroke="#777"/>')],
            [404, `<span class="w-[24px] h-[22px] bg-[#bcd7f0] border border-[#3a78b5] flex items-center justify-center">${q('<path d="M3 4h4M3 8h4M3 12h4M3 15h4M10 4h5M10 8h5M10 12h5M13 2 7 17" stroke="#235"/>')}</span>`],
            [435, q('<rect x="3" y="2" width="9" height="13" fill="#eee"/><path d="M10 10l6 6M16 10l-6 6" stroke="#c22" stroke-width="2"/>')],
            [459, q('<rect x="2" y="6" width="9" height="10" fill="#eee"/><rect x="7" y="2" width="9" height="8" fill="#fff"/>')],
            [474, tri],
            [490, '<span class="w-[7px] h-[6px] border-t border-[#333] flex justify-center pt-[1px]">' + tri + '</span>']
        ];
        document.getElementById('qat').innerHTML = qat.map((it, i) => {
            const left = i ? (qat[i - 1][0] + it[0]) / 2 : 49;
            const right = i < qat.length - 1 ? (it[0] + qat[i + 1][0]) / 2 : 498;
            return `<div class="flex items-center justify-center h-full" style="width:${right - left}px">${it[1]}</div>`;
        }).join('');

        document.getElementById('infocenter').innerHTML = `
            <svg class="ml-[3px]" width="18" height="18" viewBox="0 0 18 18" fill="#eee" stroke="#222"><rect x="2" y="6" width="6" height="10"/><rect x="10" y="6" width="6" height="10"/><path d="M4 2h2v4H4zM12 2h2v4h-2zM8 9h2"/></svg>
            <svg class="ml-[6px]" width="18" height="18" viewBox="0 0 18 18" fill="#eee" stroke="#333"><circle cx="5" cy="5" r="3.500"/><path d="M8 7l8 8-2 1-7-7z"/></svg>
            <svg class="ml-[6px]" width="18" height="18" viewBox="0 0 18 18" fill="#ddd" stroke="#333"><path d="M3 2c6 1 9 4 10 9L5 11zM9 11l-3 6h7z"/></svg>
            <svg class="ml-[6px]" width="18" height="18" viewBox="0 0 18 18" fill="#eee" stroke="#333"><path d="M9 2l2 5h5l-4 3 2 6-5-4-5 4 2-6-4-3h5z"/></svg>
            <svg class="ml-[8px]" width="18" height="18" viewBox="0 0 18 18" fill="#eee" stroke="#333"><circle cx="9" cy="6" r="4"/><path d="M2 16c1-5 4-5 7-5s6 0 7 5z"/></svg>
            <span class="ml-[3px] text-[#222]">登录</span>
            <span class="ml-[61px] w-0 h-0 border-x-[2px] border-x-transparent border-t-[3px] border-t-[#333]"></span>
            <svg class="ml-[12px]" width="18" height="18" viewBox="0 0 18 18" fill="#1f4f9e"><path d="M2 2h5l2 4 2-4h5l-5 7 5 7h-5l-2-4-2 4H2l5-7z"/></svg>
            <svg class="ml-[15px]" width="18" height="18" viewBox="0 0 18 18"><circle cx="9" cy="9" r="7.500" fill="#e6edf5" stroke="#333"/><text x="6" y="13.500" font-size="12" font-weight="700" fill="#1f4f9e">?</text></svg>
            <span class="ml-[3px] w-0 h-0 border-x-[3px] border-x-transparent border-t-[3px] border-t-[#333]"></span>`;

        // properties palette
        const sections = [
            ['图形', [['视图比例', 'input', '1 : 100'], ['比例值 1:', 'off', '100'], ['详细程度', 'text', '中等'], ['零件可见性', 'text', '显示原状态'], ['可见性/图形替换', 'btn', '编辑...'], ['图形显示选项', 'btn', '编辑...'], ['规程', 'text', '建筑'], ['显示隐藏线', 'text', '按规程'], ['默认分析显示样式', 'text', '无'], ['日光路径', 'check']]],
            ['范围', [['裁剪视图', 'check'], ['裁剪区域可见', 'check'], ['注释裁剪', 'check'], ['远剪裁激活', 'check'], ['远剪裁偏移', 'off', '304800.0'], ['剖面框', 'check']]],
            ['相机', [['渲染设置', 'btn', '编辑...'], ['锁定的方向', 'offcheck'], ['透视图', 'offcheck'], ['视点高度', 'text', '4923.2'], ['目标高度', 'text', '2459.1'], ['相机位置', 'off', '调整']]],
            ['标识数据', [['视图样板', 'btn', '<无>'], ['视图名称', 'text', '{三维}'], ['相关性', 'off', '不相关'], ['图纸上的标题', 'text', '']]],
            ['阶段化', [['阶段过滤器', 'text', '全部显示'], ['相位', 'text', '新构造']]]
        ];
        const esc = (s) => s.replace(/</g, '&lt;').replace(/>/g, '&gt;');
        const cell = (kind, v = '') => {
            if (kind === 'input') return `<div class="-ml-[3px] -mt-px w-[136px] h-[20px] bg-white border border-black pl-[6px] flex items-center text-[#111] tracking-[1.200px]">${v}</div>`;
            if (kind === 'btn') return `<div class="-ml-[1px] w-[134px] h-[18px] mt-[1px] rounded-[2px] border border-[#666] bg-gradient-to-b from-[#f8f8f8] to-[#b5b5b5] text-center leading-[16px]">${esc(v)}</div>`;
            if (kind === 'check') return '<span class="block mt-[3px] w-[13px] h-[13px] bg-[#f0f0f0] border border-[#aaa]"></span>';
            if (kind === 'offcheck') return '<span class="block mt-[3px] w-[13px] h-[13px] bg-[#f8f8f8] border border-[#ccc]"></span>';
            return `<span class="block leading-[19px] ${kind === 'off' ? 'text-[#9a9a9a]' : ''}">${v}</span>`;
        };
        document.getElementById('props').innerHTML = sections.map(([name, rows]) => `
            <div class="h-[20px] bg-[#d9d9d9] flex items-center justify-between pl-[2px] pr-[5px]"><span>${name}</span>
                <svg width="8" height="10" viewBox="0 0 8 10" fill="none" stroke="#222" stroke-width="1.400"><path d="M1 4.500 4 1.500 7 4.500M1 8.500 4 5.500 7 8.500"/></svg></div>` +
            rows.map(([label, kind, v]) => `<div class="flex h-[20px] border-b border-dotted border-[#666]">
                <div class="w-[136px] shrink-0 pl-[10px] leading-[19px] border-r border-dotted border-[#666] ${kind === 'off' || kind === 'offcheck' ? 'text-[#9a9a9a]' : ''}">${label}</div>
                <div class="flex-1 pl-[3px]">${cell(kind, v)}</div></div>`).join('')).join('');

        // project browser tree: [level, box, text, icon]
        const tr = [
            [0, '-', '视图 (全部)', 'view'], [1, '-', '楼层平面'], [2, '', '1'], [2, '', '场地'], [2, '', '标高 2'], [1, '+', '天花板平面'], [1, '-', '三维视图'], [2, '', '{三维}', 'sel'], [1, '-', '立面 (建筑立面)'],
            [2, '', '东'], [2, '', '北'], [2, '', '南'], [2, '', '西'], [1, '-', '绘图视图 (详图)'], [2, '', '楼板拆分方案设计'], [2, '', '预制楼板拆分方案1'],
            [1, '+', '面积平面 (人防分区面积)'], [1, '+', '面积平面 (净面积)'], [1, '+', '面积平面 (总建筑面积)'], [1, '+', '面积平面 (防火分区面积)'],
            [0, '', '图例', 'legend'], [0, '-', '明细表/数量', 'table'],
            ...['A_使用面积明细表', 'A_图纸目录', 'A_幕墙明细表', 'A_总建筑面积明细表', 'A_房间明细表', 'A_材料明细表', 'A_材料明细表1', 'A_防火分区面积明细表', 'A_面积明细表（人防面积）', 'B_内墙明细表', 'B_外墙明细表', 'B_屋面明细表', 'B_栏杆扶手明细表', 'B_楼板明细表', 'B_楼梯明细表', 'B_结构构架明细表', 'B_结构柱明细表'].map(t => [1, '', t]),
            [0, '', '图纸 (全部)', 'sheet'], [0, '-', '族', 'family'], [1, '+', '停车场'], [1, '+', '分割轮廓'], [1, '-', '坡道']
        ];
        const ticons = {
            view: '<svg width="18" height="16" viewBox="0 0 18 16" fill="none" stroke="#333"><path d="M1 5V1h4M13 1h4v4M1 11v4h4M13 15h4v-4"/><rect x="5" y="4" width="8" height="8" rx="2" transform="skewX(-10) translate(2 0)"/></svg>',
            legend: '<svg width="18" height="16" viewBox="0 0 18 16" fill="#fff" stroke="#333"><rect x="1" y=".5" width="15" height="15"/><rect x="1" y=".5" width="15" height="3" fill="#555"/><path d="M4 6h3M9 6h5M4 9h3M9 9h5M4 12h3M9 12h5"/></svg>',
            table: '<svg width="18" height="16" viewBox="0 0 18 16" fill="#fff" stroke="#333"><rect x="1" y="1.500" width="15" height="13"/><rect x="1" y="1.500" width="15" height="3" fill="#555"/><path d="M1 8h15M1 11h15M6 4v10M11 4v10"/></svg>',
            sheet: '<svg width="18" height="16" viewBox="0 0 18 16" fill="#fff" stroke="#333"><path d="M1 4h9l2-3h4v13H1z"/><rect x="3" y="7" width="4" height="5"/><path d="M9 7h4v5"/></svg>',
            family: '<svg width="18" height="16" viewBox="0 0 18 16" fill="#fff" stroke="#333"><path d="M2 1h13v14H2v-7h5V1"/><rect x="3" y="2" width="4" height="4"/></svg>'
        };
        const box = (b) => `<span class="w-[9px] h-[9px] shrink-0 border border-[#8b8b9b] bg-[#f5f5f5] flex items-center justify-center relative">
            <span class="w-[5px] h-px bg-[#222]"></span>${b === '+' ? '<span class="absolute w-px h-[5px] bg-[#222]"></span>' : ''}</span>`;
        const dots = 'h-px shrink-0 border-t border-dotted border-[#777]';
        const row = ([lvl, b, text, ic]) => {
            if (lvl === 0) return `<div class="relative h-[20px] flex items-center ${b ? 'pl-[6px]' : 'pl-[10px]'}">${b ? box(b) : ''}<span class="${dots} ${b ? 'w-[5px]' : 'w-[9px]'}"></span><span class="w-[18px] shrink-0 flex">${ticons[ic]}</span><span class="ml-[6px] whitespace-nowrap">${text}</span></div>`;
            if (lvl === 1) return `<div class="relative h-[20px] flex items-center ${b ? 'pl-[26px]' : 'pl-[31px]'}">${b ? box(b) : ''}<span class="${dots} ${b ? 'w-[10px]' : 'w-[14px]'}"></span><span class="ml-[3px] whitespace-nowrap">${text}</span></div>`;
            const sel = ic === 'sel';
            return `<div class="relative h-[20px] flex items-center pl-[50px]"><span class="${dots} w-[14px]"></span><span class="ml-[2px] whitespace-nowrap h-[20px] leading-[20px] px-[2px] ${sel ? 'bg-[#dcdcdc] font-bold' : ''}">${text}</span></div>`;
        };
        const vline = (x, y1, y2) => `<span class="absolute border-l border-dotted border-[#777]" style="left:${x}px;top:${y1}px;height:${y2 - y1}px"></span>`;
        document.getElementById('tree').innerHTML = tr.map(row).join('') +
            vline(10, 17, 813) + vline(30, 37, 793) + vline(30, 823, 871) +
            vline(50, 41, 93) + vline(50, 133, 153) + vline(50, 173, 253) + vline(50, 293, 313);

        // view control bar and status bar icons
        const v = (s) => `<svg width="17" height="15" viewBox="0 0 17 15">${s}</svg>`;
        const redx = '<path d="M10 9l5 5M15 9l-5 5" stroke="#c22" stroke-width="2"/>';
        document.getElementById('viewctl').innerHTML = [
            '<rect x="1" y="1" width="15" height="13" fill="#fff" stroke="#333"/><path d="M1 7h4V4h5v3h6v4h-5v3H5v-3H1z" fill="#777"/>',
            '<path d="M1 6l4-4h11v8l-4 4H1z" fill="#9fc9ea" stroke="#2a6ca8"/><path d="M1 6h11v8M12 6l4-4" fill="none" stroke="#2a6ca8"/>',
            '<circle cx="7" cy="7" r="3.500" fill="#f2d77c" stroke="#a88"/><path d="M7 0v2M7 12v2M0 7h2M12 7h2M2 2l1.500 1.500M11 2 9.500 3.500M2 12l1.500-1.500" stroke="#b08a20"/>' + redx,
            '<circle cx="6" cy="5" r="3.500" fill="none" stroke="#2a6ca8"/><path d="M1 11h10" stroke="#555" stroke-width="2"/>' + redx,
            '<path d="M1 6l4-3h5l2 3-2 4H5z" fill="none" stroke="#555"/><circle cx="13" cy="8" r="3" fill="#cfe4f5" stroke="#2a6ca8"/><path d="M13 11v3" stroke="#2a6ca8"/>',
            '<path d="M1 7h4V3h6v4" fill="none" stroke="#2a6ca8" stroke-dasharray="2 1"/><path d="M3 8v6M7 8v6" stroke="#2a6ca8"/>' + redx,
            '<path d="M1 7h4V3h6v4" fill="none" stroke="#2a6ca8" stroke-dasharray="2 1"/><path d="M3 8v6M7 8v6" stroke="#2a6ca8"/><circle cx="13" cy="6" r="3" fill="#cfe4f5" stroke="#2a6ca8"/><path d="M13 9v4" stroke="#2a6ca8"/>',
            '<path d="M2 11V6a5 5 0 0 1 10 0v5z" fill="#eee" stroke="#444"/><rect x="8" y="7" width="7" height="7" fill="#bcdcc0" stroke="#367"/>',
            '<circle cx="5" cy="8" r="3" fill="none" stroke="#444"/><path d="M8 8q3-6 8-4-1 6-8 4z" fill="none" stroke="#444"/>',
            '<circle cx="8" cy="5" r="3" fill="#cfe4f5" stroke="#2a6ca8"/><path d="M8 8v5" stroke="#2a6ca8"/>',
            '<rect x="1" y="3" width="14" height="10" fill="none" stroke="#333" stroke-dasharray="2 1"/><rect x="7" y="6" width="7" height="7" fill="#fff" stroke="#333"/>',
            '<path d="M1 14V6h10v8M1 6l5-4 5 4M4 14V9M8 14V9" fill="none" stroke="#a33"/><circle cx="12" cy="6" r="3.500" fill="#f2d77c" stroke="#b08a20"/>',
            '<path d="M1 5l5-3h8v8l-4 3H1z" fill="#eee" stroke="#555"/><path d="M1 5h9v8M10 5l4-3" fill="none" stroke="#555"/>',
            '<path d="M1 1v13M14 1v5M1 3h13" fill="none" stroke="#333" stroke-dasharray="2 1"/><rect x="9" y="9" width="6" height="5" fill="#bbb" stroke="#333"/><path d="M10 9V7a2 2 0 0 1 4 0v2" fill="none" stroke="#333"/>'
        ].map(v).join('');

        const cur = '<path d="M10 6v9l2-2 1 3 1-.5-1-3h3z" fill="#fff" stroke="#333" stroke-width=".8"/>';
        const st = (s, bg = '') => `<span class="w-[18px] h-[18px] flex items-center justify-center ${bg}"><svg width="18" height="18" viewBox="0 0 18 18">${s}${cur}</svg></span>`;
        document.getElementById('statusicons').innerHTML = [
            st('<path d="M2 6a3 3 0 0 1 3-3h4a3 3 0 0 1 0 6H5a3 3 0 0 1-3-3z" fill="none" stroke="#c59a1a" stroke-width="2"/>', 'bg-[#bfc8d2]'),
            st('<path d="M1 12 9 3h4l-7 9z" fill="#dbe8f3" stroke="#2a6ca8"/><path d="M2 8h9M3 11h6" stroke="#2a6ca8"/>', 'bg-[#bfc8d2]'),
            st('<path d="M4 1h7v6H9l1 3H5l1-3H4z" fill="#f2a57a" stroke="#a33"/><path d="M7 10v6" stroke="#a33"/>', 'bg-[#bfc8d2]'),
            st('<path d="M2 4l6-3v11l-6 3z" fill="#dbe8f3" stroke="#2a6ca8"/>', 'bg-[#bfc8d2]'),
            st('<path d="M1 6h8M5 2v8M3 4 1 6l2 2M7 4l2 2-2 2" fill="none" stroke="#222"/><path d="M10 1l5 5M15 1l-5 5" stroke="#c22" stroke-width="2"/>'),
            '<svg width="18" height="18" viewBox="0 0 18 18"><path d="M1 2h16l-6 7v8l-4-2V9z" fill="#e8eef3" stroke="#555"/></svg>'
        ].join('');
    </script>
</body>

</html>
